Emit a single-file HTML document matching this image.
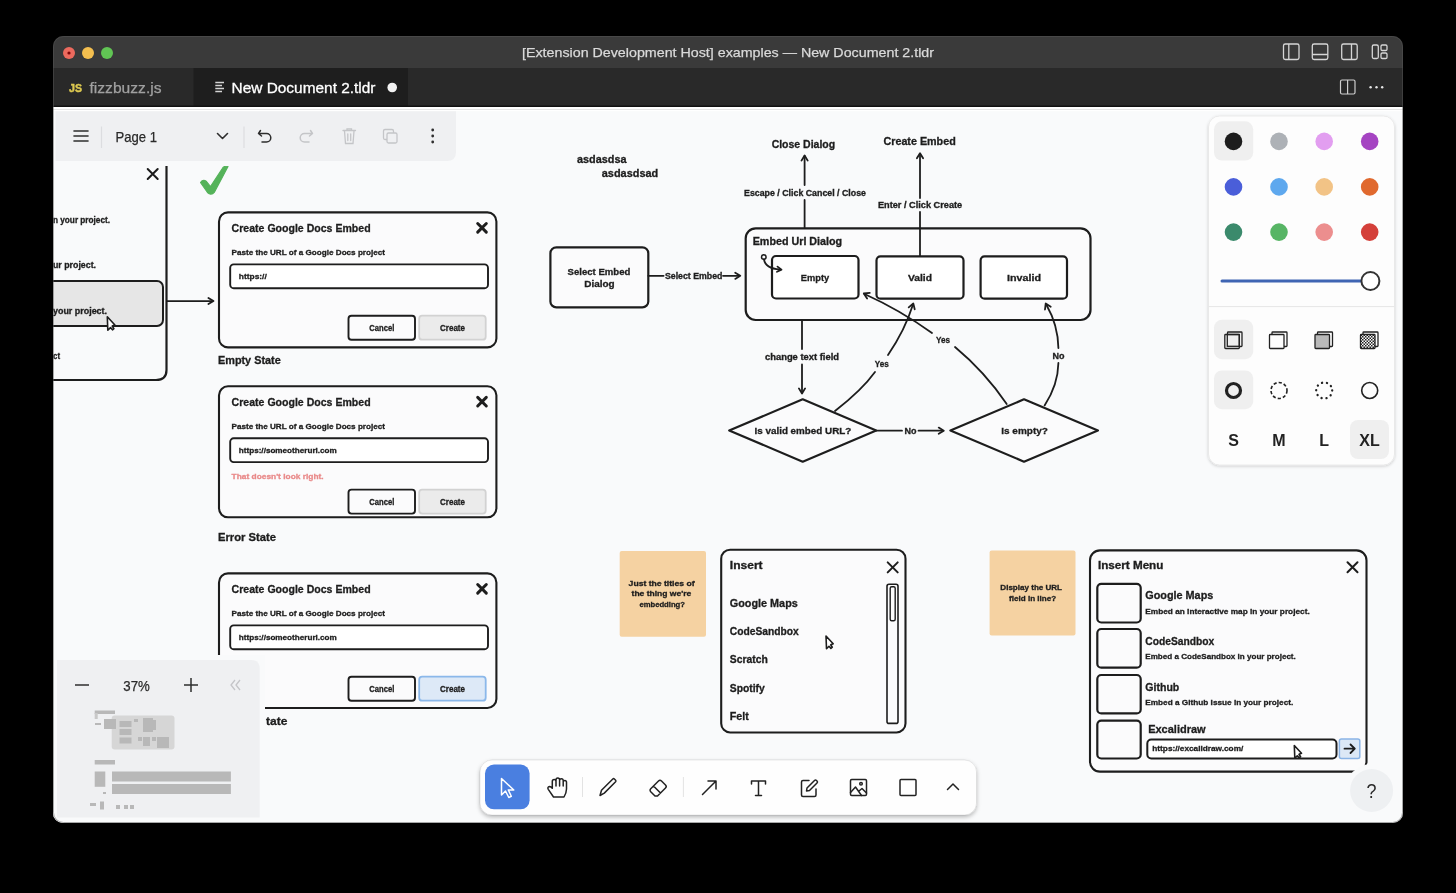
<!DOCTYPE html>
<html><head><meta charset="utf-8">
<style>
html,body{margin:0;padding:0;background:#000;width:1456px;height:893px;overflow:hidden}
svg{position:absolute;left:0;top:0;display:block;will-change:transform}
text{font-family:"Liberation Sans",sans-serif}
.hd{font-weight:bold;fill:#1d1d1d}
</style></head><body>
<svg width="1456" height="893" viewBox="0 0 1456 893">
<defs>
<clipPath id="win"><rect x="53" y="36" width="1350" height="787" rx="10" ry="10"/></clipPath>
<filter id="sh" x="-10%" y="-10%" width="120%" height="130%"><feDropShadow dx="0" dy="1" stdDeviation="1.5" flood-color="#000" flood-opacity="0.18"/></filter>
<filter id="sh2" x="-10%" y="-20%" width="120%" height="150%"><feDropShadow dx="0" dy="2" stdDeviation="2" flood-color="#000" flood-opacity="0.28"/></filter>
</defs>
<rect width="1456" height="893" fill="#000"/>
<g clip-path="url(#win)">
<!-- title bar -->
<rect x="53" y="36" width="1350" height="32" fill="#3a3a3a"/>
<!-- tab bar -->
<rect x="53" y="68" width="1350" height="39" fill="#292929"/>
<rect x="193.5" y="68" width="214.5" height="39" fill="#1e1e1e"/>
<!-- canvas -->
<rect x="53" y="107" width="1350" height="716" fill="#f9fafb"/>
<rect x="53" y="105.6" width="1350" height="1.4" fill="#111"/>
<rect x="53" y="107" width="1350" height="4.2" fill="#ffffff"/>
<rect x="53" y="109" width="1350" height="0.9" fill="#e3e3e3"/>


<!-- tab contents -->
<text x="69" y="91.5" font-size="10.5" font-weight="bold" fill="#dcc850" stroke="#dcc850" stroke-width="0.4" textLength="13" lengthAdjust="spacingAndGlyphs">JS</text>
<text x="89.5" y="92.5" font-size="15" fill="#a0a0a0" stroke="#a0a0a0" stroke-width="0.25" textLength="72" lengthAdjust="spacingAndGlyphs">fizzbuzz.js</text>
<g stroke="#d4d4d4" stroke-width="1.3">
<line x1="215.3" y1="82.5" x2="224" y2="82.5"/><line x1="215.3" y1="85.5" x2="222" y2="85.5"/><line x1="215.3" y1="88.5" x2="224" y2="88.5"/><line x1="215.3" y1="91.5" x2="222" y2="91.5"/>
</g>
<text x="231.5" y="93" font-size="15" fill="#ffffff" stroke="#ffffff" stroke-width="0.3" textLength="144" lengthAdjust="spacingAndGlyphs">New Document 2.tldr</text>
<circle cx="392.2" cy="87.5" r="4.8" fill="#f2f2f2"/>
<!-- tab bar right icons -->
<g fill="none" stroke="#cfcfcf" stroke-width="1.2">
<rect x="1340.5" y="80" width="14.5" height="14" rx="1.5"/><line x1="1347.6" y1="80" x2="1347.6" y2="94"/>
</g>
<circle cx="1370.6" cy="87.3" r="1.2" fill="#e6e6e6"/><circle cx="1376.5" cy="87.3" r="1.2" fill="#e6e6e6"/><circle cx="1382.2" cy="87.3" r="1.2" fill="#e6e6e6"/>
<!-- title bar icons -->
<g fill="none" stroke="#d6d6d6" stroke-width="1.3">
<rect x="1283.5" y="44" width="15.5" height="15.5" rx="1.8"/><line x1="1288.8" y1="44" x2="1288.8" y2="59.5"/>
<rect x="1312.3" y="44" width="15.5" height="15.5" rx="1.8"/><line x1="1312.3" y1="54.5" x2="1327.8" y2="54.5"/>
<rect x="1341.7" y="44" width="15.5" height="15.5" rx="1.8"/><line x1="1351.5" y1="44" x2="1351.5" y2="59.5"/>
<rect x="1372.3" y="45" width="6" height="13.5" rx="1.5"/><rect x="1381" y="45" width="6" height="5.5" rx="1.3"/><rect x="1381" y="53" width="6" height="5.5" rx="1.3"/>
</g>

<!-- CANVAS CONTENT -->
<g id="canvas">
<path d="M166.5 162 V370 Q166.5 380 156 380 H40" fill="none" stroke="#1d1d1d" stroke-width="2.2" stroke-linecap="round" stroke-linejoin="round"/>
<rect x="40" y="281" width="123" height="45" rx="6" fill="#e6e6e6" stroke="#1d1d1d" stroke-width="2"/>
<path d="M147.7 169 L157.7 179 M157.7 169 L147.7 179" fill="none" stroke="#1d1d1d" stroke-width="2" stroke-linecap="round" stroke-linejoin="round"/>
<text x="53.0" y="223.1" font-size="8.5" font-weight="bold" fill="#1d1d1d" stroke="#1d1d1d" stroke-width="0.3" text-anchor="start" textLength="57" lengthAdjust="spacingAndGlyphs">n your project.</text>
<text x="53.0" y="268.4" font-size="8.5" font-weight="bold" fill="#1d1d1d" stroke="#1d1d1d" stroke-width="0.3" text-anchor="start" textLength="43" lengthAdjust="spacingAndGlyphs">ur project.</text>
<text x="53.0" y="313.9" font-size="8.5" font-weight="bold" fill="#1d1d1d" stroke="#1d1d1d" stroke-width="0.3" text-anchor="start" textLength="54" lengthAdjust="spacingAndGlyphs">your project.</text>
<text x="53.0" y="359.3" font-size="8.5" font-weight="bold" fill="#1d1d1d" stroke="#1d1d1d" stroke-width="0.3" text-anchor="start" textLength="7" lengthAdjust="spacingAndGlyphs">ct</text>
<path d="M107.3 316.8 L107.8 330.3 L110.5 327.6 L112.5 329.8 L113.9 328.6 L112.2 326.1 L114.9 325.0 Z" fill="#fff" stroke="#1d1d1d" stroke-width="1.6" stroke-linejoin="round"/>
<path d="M167 301.2 H212" fill="none" stroke="#1d1d1d" stroke-width="1.8" stroke-linecap="round" stroke-linejoin="round"/>
<path d="M208.4 304.1 L213.5 301.0 L208.4 297.9" fill="none" stroke="#1d1d1d" stroke-width="1.8" stroke-linecap="round" stroke-linejoin="round"/>
<path d="M200.5 182.5 Q203 179 206.5 181.5 L210.5 186.5 L223 167.5 Q225.5 165.5 228 166.5 L214.5 192 Q211 196 207.5 192.5 Z" fill="#55b35a" stroke="#55b35a" stroke-width="1.2" stroke-linejoin="round"/>
<rect x="219.0" y="212.4" width="277.4" height="135.0" rx="9" fill="#fbfbfc" stroke="#1d1d1d" stroke-width="2.1"/>
<text x="231.6" y="231.8" font-size="11.5" font-weight="bold" fill="#1d1d1d" stroke="#1d1d1d" stroke-width="0.3" text-anchor="start" textLength="139" lengthAdjust="spacingAndGlyphs">Create Google Docs Embed</text>
<path d="M477.7 223.5 L486.3 232.10000000000002 M486.3 223.5 L477.7 232.10000000000002" fill="none" stroke="#1d1d1d" stroke-width="3" stroke-linecap="round" stroke-linejoin="round"/>
<text x="231.6" y="254.9" font-size="8" font-weight="bold" fill="#1d1d1d" stroke="#1d1d1d" stroke-width="0.3" text-anchor="start" textLength="153.4" lengthAdjust="spacingAndGlyphs">Paste the URL of a Google Docs project</text>
<rect x="230.2" y="264.4" width="257.8" height="23.8" rx="3.5" fill="#ffffff" stroke="#1d1d1d" stroke-width="1.9"/>
<text x="238.8" y="278.9" font-size="8" font-weight="bold" fill="#1d1d1d" stroke="#1d1d1d" stroke-width="0.3" text-anchor="start" textLength="28" lengthAdjust="spacingAndGlyphs">https://</text>
<rect x="348.5" y="315.7" width="66.5" height="24.0" rx="3" fill="#fbfbfc" stroke="#1d1d1d" stroke-width="1.9"/>
<rect x="419.2" y="315.7" width="66.5" height="24.0" rx="3" fill="#ebebeb" stroke="#d2d2d2" stroke-width="1.8"/>
<text x="381.8" y="330.8" font-size="8.5" font-weight="bold" fill="#1d1d1d" stroke="#1d1d1d" stroke-width="0.3" text-anchor="middle" textLength="25" lengthAdjust="spacingAndGlyphs">Cancel</text>
<text x="452.5" y="330.8" font-size="8.5" font-weight="bold" fill="#1d1d1d" stroke="#1d1d1d" stroke-width="0.3" text-anchor="middle" textLength="25" lengthAdjust="spacingAndGlyphs">Create</text>
<text x="218.0" y="363.5" font-size="10.5" font-weight="bold" fill="#1d1d1d" stroke="#1d1d1d" stroke-width="0.3" text-anchor="start" textLength="62.7" lengthAdjust="spacingAndGlyphs">Empty State</text>
<rect x="219.0" y="386.3" width="277.4" height="131.0" rx="9" fill="#fbfbfc" stroke="#1d1d1d" stroke-width="2.1"/>
<text x="231.6" y="405.7" font-size="11.5" font-weight="bold" fill="#1d1d1d" stroke="#1d1d1d" stroke-width="0.3" text-anchor="start" textLength="139" lengthAdjust="spacingAndGlyphs">Create Google Docs Embed</text>
<path d="M477.7 397.4 L486.3 406.0 M486.3 397.4 L477.7 406.0" fill="none" stroke="#1d1d1d" stroke-width="3" stroke-linecap="round" stroke-linejoin="round"/>
<text x="231.6" y="428.8" font-size="8" font-weight="bold" fill="#1d1d1d" stroke="#1d1d1d" stroke-width="0.3" text-anchor="start" textLength="153.4" lengthAdjust="spacingAndGlyphs">Paste the URL of a Google Docs project</text>
<rect x="230.2" y="438.3" width="257.8" height="23.8" rx="3.5" fill="#ffffff" stroke="#1d1d1d" stroke-width="1.9"/>
<text x="238.8" y="452.8" font-size="8" font-weight="bold" fill="#1d1d1d" stroke="#1d1d1d" stroke-width="0.3" text-anchor="start" textLength="98" lengthAdjust="spacingAndGlyphs">https://someotherurl.com</text>
<text x="231.6" y="478.5" font-size="8" font-weight="bold" fill="#e98a8a" stroke="#e98a8a" stroke-width="0.3" text-anchor="start" textLength="92" lengthAdjust="spacingAndGlyphs">That doesn't look right.</text>
<rect x="348.5" y="489.6" width="66.5" height="24.0" rx="3" fill="#fbfbfc" stroke="#1d1d1d" stroke-width="1.9"/>
<rect x="419.2" y="489.6" width="66.5" height="24.0" rx="3" fill="#ebebeb" stroke="#d2d2d2" stroke-width="1.8"/>
<text x="381.8" y="504.7" font-size="8.5" font-weight="bold" fill="#1d1d1d" stroke="#1d1d1d" stroke-width="0.3" text-anchor="middle" textLength="25" lengthAdjust="spacingAndGlyphs">Cancel</text>
<text x="452.5" y="504.7" font-size="8.5" font-weight="bold" fill="#1d1d1d" stroke="#1d1d1d" stroke-width="0.3" text-anchor="middle" textLength="25" lengthAdjust="spacingAndGlyphs">Create</text>
<text x="218.0" y="540.6" font-size="10.5" font-weight="bold" fill="#1d1d1d" stroke="#1d1d1d" stroke-width="0.3" text-anchor="start" textLength="58" lengthAdjust="spacingAndGlyphs">Error State</text>
<rect x="219.0" y="573.4" width="277.4" height="134.6" rx="9" fill="#fbfbfc" stroke="#1d1d1d" stroke-width="2.1"/>
<text x="231.6" y="592.8" font-size="11.5" font-weight="bold" fill="#1d1d1d" stroke="#1d1d1d" stroke-width="0.3" text-anchor="start" textLength="139" lengthAdjust="spacingAndGlyphs">Create Google Docs Embed</text>
<path d="M477.7 584.5 L486.3 593.0999999999999 M486.3 584.5 L477.7 593.0999999999999" fill="none" stroke="#1d1d1d" stroke-width="3" stroke-linecap="round" stroke-linejoin="round"/>
<text x="231.6" y="615.9" font-size="8" font-weight="bold" fill="#1d1d1d" stroke="#1d1d1d" stroke-width="0.3" text-anchor="start" textLength="153.4" lengthAdjust="spacingAndGlyphs">Paste the URL of a Google Docs project</text>
<rect x="230.2" y="625.4" width="257.8" height="23.8" rx="3.5" fill="#ffffff" stroke="#1d1d1d" stroke-width="1.9"/>
<text x="238.8" y="639.9" font-size="8" font-weight="bold" fill="#1d1d1d" stroke="#1d1d1d" stroke-width="0.3" text-anchor="start" textLength="98" lengthAdjust="spacingAndGlyphs">https://someotherurl.com</text>
<rect x="348.5" y="676.7" width="66.5" height="24.0" rx="3" fill="#fbfbfc" stroke="#1d1d1d" stroke-width="1.9"/>
<rect x="419.2" y="676.7" width="66.5" height="24.0" rx="3" fill="#dde9f7" stroke="#8bb8ea" stroke-width="1.8"/>
<text x="381.8" y="691.8" font-size="8.5" font-weight="bold" fill="#1d1d1d" stroke="#1d1d1d" stroke-width="0.3" text-anchor="middle" textLength="25" lengthAdjust="spacingAndGlyphs">Cancel</text>
<text x="452.5" y="691.8" font-size="8.5" font-weight="bold" fill="#1d1d1d" stroke="#1d1d1d" stroke-width="0.3" text-anchor="middle" textLength="25" lengthAdjust="spacingAndGlyphs">Create</text>
<text x="266.0" y="724.5" font-size="10.5" font-weight="bold" fill="#1d1d1d" stroke="#1d1d1d" stroke-width="0.3" text-anchor="start" textLength="21.3" lengthAdjust="spacingAndGlyphs">tate</text>
<text x="577.0" y="162.8" font-size="11" font-weight="bold" fill="#1d1d1d" stroke="#1d1d1d" stroke-width="0.3" text-anchor="start" textLength="49.5" lengthAdjust="spacingAndGlyphs">asdasdsa</text>
<text x="601.8" y="177.2" font-size="11" font-weight="bold" fill="#1d1d1d" stroke="#1d1d1d" stroke-width="0.3" text-anchor="start" textLength="56.4" lengthAdjust="spacingAndGlyphs">asdasdsad</text>
<rect x="550.4" y="247.3" width="97.9" height="60.1" rx="6" fill="#fbfbfc" stroke="#1d1d1d" stroke-width="2.2"/>
<text x="599.0" y="274.7" font-size="9.5" font-weight="bold" fill="#1d1d1d" stroke="#1d1d1d" stroke-width="0.3" text-anchor="middle" textLength="62.8" lengthAdjust="spacingAndGlyphs">Select Embed</text>
<text x="599.5" y="287.1" font-size="9.5" font-weight="bold" fill="#1d1d1d" stroke="#1d1d1d" stroke-width="0.3" text-anchor="middle" textLength="30.4" lengthAdjust="spacingAndGlyphs">Dialog</text>
<path d="M648.3 275.8 H663.6" fill="none" stroke="#1d1d1d" stroke-width="1.8" stroke-linecap="round" stroke-linejoin="round"/>
<text x="664.9" y="278.9" font-size="8.5" font-weight="bold" fill="#1d1d1d" stroke="#1d1d1d" stroke-width="0.3" text-anchor="start" textLength="57.6" lengthAdjust="spacingAndGlyphs">Select Embed</text>
<path d="M723 275.8 H739" fill="none" stroke="#1d1d1d" stroke-width="1.8" stroke-linecap="round" stroke-linejoin="round"/>
<path d="M735.2 278.9 L740.3 275.8 L735.2 272.7" fill="none" stroke="#1d1d1d" stroke-width="1.8" stroke-linecap="round" stroke-linejoin="round"/>
<rect x="745.7" y="228.3" width="344.8" height="91.7" rx="10" fill="#fbfbfc" stroke="#1d1d1d" stroke-width="2.2"/>
<text x="752.7" y="244.8" font-size="10" font-weight="bold" fill="#1d1d1d" stroke="#1d1d1d" stroke-width="0.3" text-anchor="start" textLength="89.5" lengthAdjust="spacingAndGlyphs">Embed Url Dialog</text>
<rect x="772.0" y="256.0" width="86.5" height="42.5" rx="4" fill="#ffffff" stroke="#1d1d1d" stroke-width="2.2"/>
<text x="815.0" y="281.2" font-size="9.5" font-weight="bold" fill="#1d1d1d" stroke="#1d1d1d" stroke-width="0.3" text-anchor="middle" textLength="28.4" lengthAdjust="spacingAndGlyphs">Empty</text>
<rect x="876.5" y="256.4" width="87.0" height="42.3" rx="4" fill="#ffffff" stroke="#1d1d1d" stroke-width="2.2"/>
<text x="920.0" y="280.5" font-size="9.5" font-weight="bold" fill="#1d1d1d" stroke="#1d1d1d" stroke-width="0.3" text-anchor="middle" textLength="24" lengthAdjust="spacingAndGlyphs">Valid</text>
<rect x="980.6" y="256.4" width="86.4" height="42.3" rx="4" fill="#ffffff" stroke="#1d1d1d" stroke-width="2.2"/>
<text x="1024.0" y="280.5" font-size="9.5" font-weight="bold" fill="#1d1d1d" stroke="#1d1d1d" stroke-width="0.3" text-anchor="middle" textLength="34" lengthAdjust="spacingAndGlyphs">Invalid</text>
<circle cx="763.8" cy="257" r="2.3" fill="#fbfbfc" stroke="#1d1d1d" stroke-width="1.5"/>
<path d="M764 259.5 Q765.5 268.5 780 269.5" fill="none" stroke="#1d1d1d" stroke-width="1.8" stroke-linecap="round" stroke-linejoin="round"/>
<path d="M777.0 271.8 L781.5 269.6 L777.5 266.6" fill="none" stroke="#1d1d1d" stroke-width="1.8" stroke-linecap="round" stroke-linejoin="round"/>
<text x="803.4" y="147.8" font-size="10.5" font-weight="bold" fill="#1d1d1d" stroke="#1d1d1d" stroke-width="0.3" text-anchor="middle" textLength="63.5" lengthAdjust="spacingAndGlyphs">Close Dialog</text>
<path d="M804.6 227.6 V200 M804.6 185 V156" fill="none" stroke="#1d1d1d" stroke-width="1.8" stroke-linecap="round" stroke-linejoin="round"/>
<path d="M807.7 160.6 L804.6 155.5 L801.5 160.6" fill="none" stroke="#1d1d1d" stroke-width="1.8" stroke-linecap="round" stroke-linejoin="round"/>
<text x="805.0" y="195.6" font-size="8.5" font-weight="bold" fill="#1d1d1d" stroke="#1d1d1d" stroke-width="0.3" text-anchor="middle" textLength="122" lengthAdjust="spacingAndGlyphs">Escape / Click Cancel / Close</text>
<text x="919.6" y="145.0" font-size="10.5" font-weight="bold" fill="#1d1d1d" stroke="#1d1d1d" stroke-width="0.3" text-anchor="middle" textLength="72.2" lengthAdjust="spacingAndGlyphs">Create Embed</text>
<path d="M920 256 V212 M920 198 V154" fill="none" stroke="#1d1d1d" stroke-width="1.8" stroke-linecap="round" stroke-linejoin="round"/>
<path d="M923.1 158.3 L920.0 153.2 L916.9 158.3" fill="none" stroke="#1d1d1d" stroke-width="1.8" stroke-linecap="round" stroke-linejoin="round"/>
<text x="920.1" y="208.2" font-size="8.5" font-weight="bold" fill="#1d1d1d" stroke="#1d1d1d" stroke-width="0.3" text-anchor="middle" textLength="84.3" lengthAdjust="spacingAndGlyphs">Enter / Click Create</text>
<path d="M802 320.5 V349 M802 364.5 V392" fill="none" stroke="#1d1d1d" stroke-width="1.8" stroke-linecap="round" stroke-linejoin="round"/>
<path d="M798.9 388.4 L802.0 393.5 L805.1 388.4" fill="none" stroke="#1d1d1d" stroke-width="1.8" stroke-linecap="round" stroke-linejoin="round"/>
<text x="802.0" y="359.9" font-size="8.5" font-weight="bold" fill="#1d1d1d" stroke="#1d1d1d" stroke-width="0.3" text-anchor="middle" textLength="74" lengthAdjust="spacingAndGlyphs">change text field</text>
<path d="M729.2 430.5 Q766 415 802.7 399.3 Q839.5 415 876.2 430.5 Q839.5 446 802.7 461.7 Q766 446 729.2 430.5 Z" fill="#fbfbfc" stroke="#1d1d1d" stroke-width="2.2" stroke-linecap="round" stroke-linejoin="round"/>
<text x="802.9" y="434.1" font-size="9.5" font-weight="bold" fill="#1d1d1d" stroke="#1d1d1d" stroke-width="0.3" text-anchor="middle" textLength="96.7" lengthAdjust="spacingAndGlyphs">Is valid embed URL?</text>
<path d="M950.4 430.5 L1024 399.3 L1097.9 430.5 L1024 461.7 Z" fill="#fbfbfc" stroke="#1d1d1d" stroke-width="2.2" stroke-linecap="round" stroke-linejoin="round"/>
<text x="1024.6" y="434.1" font-size="9.5" font-weight="bold" fill="#1d1d1d" stroke="#1d1d1d" stroke-width="0.3" text-anchor="middle" textLength="46.7" lengthAdjust="spacingAndGlyphs">Is empty?</text>
<path d="M876.5 430.7 H902 M918.5 430.7 H942.5" fill="none" stroke="#1d1d1d" stroke-width="1.8" stroke-linecap="round" stroke-linejoin="round"/>
<path d="M938.7 433.8 L943.8 430.7 L938.7 427.6" fill="none" stroke="#1d1d1d" stroke-width="1.8" stroke-linecap="round" stroke-linejoin="round"/>
<text x="910.5" y="433.8" font-size="8.5" font-weight="bold" fill="#1d1d1d" stroke="#1d1d1d" stroke-width="0.3" text-anchor="middle" textLength="12" lengthAdjust="spacingAndGlyphs">No</text>
<path d="M835 411 Q862 390 875 372 M888 355 Q905 330 912.8 305" fill="none" stroke="#1d1d1d" stroke-width="1.8" stroke-linecap="round" stroke-linejoin="round"/>
<path d="M914.7 309.3 L913.3 303.5 L908.7 307.4" fill="none" stroke="#1d1d1d" stroke-width="1.8" stroke-linecap="round" stroke-linejoin="round"/>
<text x="881.7" y="367.3" font-size="8.5" font-weight="bold" fill="#1d1d1d" stroke="#1d1d1d" stroke-width="0.3" text-anchor="middle" textLength="14" lengthAdjust="spacingAndGlyphs">Yes</text>
<path d="M1006.7 404 Q985 372 955 347 M932 333 Q900 310 864.5 294" fill="none" stroke="#1d1d1d" stroke-width="1.8" stroke-linecap="round" stroke-linejoin="round"/>
<path d="M869.8 292.8 L863.8 293.5 L867.1 298.5" fill="none" stroke="#1d1d1d" stroke-width="1.8" stroke-linecap="round" stroke-linejoin="round"/>
<text x="943.0" y="342.6" font-size="8.5" font-weight="bold" fill="#1d1d1d" stroke="#1d1d1d" stroke-width="0.3" text-anchor="middle" textLength="14" lengthAdjust="spacingAndGlyphs">Yes</text>
<path d="M1044.6 405.4 Q1058 385 1058.4 363 M1058.4 348 Q1058 325 1046.5 305" fill="none" stroke="#1d1d1d" stroke-width="1.8" stroke-linecap="round" stroke-linejoin="round"/>
<path d="M1050.7 306.8 L1045.7 303.5 L1045.0 309.5" fill="none" stroke="#1d1d1d" stroke-width="1.8" stroke-linecap="round" stroke-linejoin="round"/>
<text x="1058.4" y="358.5" font-size="8.5" font-weight="bold" fill="#1d1d1d" stroke="#1d1d1d" stroke-width="0.3" text-anchor="middle" textLength="12" lengthAdjust="spacingAndGlyphs">No</text>
<rect x="619.7" y="551" width="86.3" height="85.7" rx="2" fill="#f5d2a2"/>
<text x="661.6" y="585.7" font-size="7.5" font-weight="bold" fill="#1d1d1d" stroke="#1d1d1d" stroke-width="0.3" text-anchor="middle" textLength="66" lengthAdjust="spacingAndGlyphs">Just the titles of</text>
<text x="661.4" y="596.3" font-size="7.5" font-weight="bold" fill="#1d1d1d" stroke="#1d1d1d" stroke-width="0.3" text-anchor="middle" textLength="59.7" lengthAdjust="spacingAndGlyphs">the thing we're</text>
<text x="662.2" y="606.7" font-size="7.5" font-weight="bold" fill="#1d1d1d" stroke="#1d1d1d" stroke-width="0.3" text-anchor="middle" textLength="45.6" lengthAdjust="spacingAndGlyphs">embedding?</text>
<rect x="989.6" y="550.4" width="85.9" height="85" rx="2" fill="#f5d2a2"/>
<text x="1031.2" y="590.3" font-size="7.5" font-weight="bold" fill="#1d1d1d" stroke="#1d1d1d" stroke-width="0.3" text-anchor="middle" textLength="61.7" lengthAdjust="spacingAndGlyphs">Display the URL</text>
<text x="1032.6" y="600.5" font-size="7.5" font-weight="bold" fill="#1d1d1d" stroke="#1d1d1d" stroke-width="0.3" text-anchor="middle" textLength="47" lengthAdjust="spacingAndGlyphs">field in line?</text>
<rect x="721.2" y="549.7" width="184.3" height="182.8" rx="9" fill="#fbfbfc" stroke="#1d1d1d" stroke-width="2.1"/>
<text x="729.8" y="569.3" font-size="10" font-weight="bold" fill="#1d1d1d" stroke="#1d1d1d" stroke-width="0.3" text-anchor="start" textLength="32.8" lengthAdjust="spacingAndGlyphs">Insert</text>
<path d="M887.7 562.4 L897.7 572.4 M897.7 562.4 L887.7 572.4" fill="none" stroke="#1d1d1d" stroke-width="2" stroke-linecap="round" stroke-linejoin="round"/>
<text x="729.8" y="606.5" font-size="10.5" font-weight="bold" fill="#1d1d1d" stroke="#1d1d1d" stroke-width="0.3" text-anchor="start" textLength="68" lengthAdjust="spacingAndGlyphs">Google Maps</text>
<text x="729.8" y="634.8" font-size="10.5" font-weight="bold" fill="#1d1d1d" stroke="#1d1d1d" stroke-width="0.3" text-anchor="start" textLength="69" lengthAdjust="spacingAndGlyphs">CodeSandbox</text>
<text x="729.8" y="662.6" font-size="10.5" font-weight="bold" fill="#1d1d1d" stroke="#1d1d1d" stroke-width="0.3" text-anchor="start" textLength="38" lengthAdjust="spacingAndGlyphs">Scratch</text>
<text x="729.8" y="691.5" font-size="10.5" font-weight="bold" fill="#1d1d1d" stroke="#1d1d1d" stroke-width="0.3" text-anchor="start" textLength="35" lengthAdjust="spacingAndGlyphs">Spotify</text>
<text x="729.8" y="719.8" font-size="10.5" font-weight="bold" fill="#1d1d1d" stroke="#1d1d1d" stroke-width="0.3" text-anchor="start" textLength="19" lengthAdjust="spacingAndGlyphs">Felt</text>
<rect x="887.0" y="584.2" width="11.0" height="139.2" rx="2" fill="#fbfbfc" stroke="#1d1d1d" stroke-width="1.6"/>
<rect x="890.2" y="586.7" width="5.0" height="34.0" rx="1.5" fill="#fbfbfc" stroke="#1d1d1d" stroke-width="1.4"/>
<path d="M826.0 636.0 L826.5 648.8 L829.0 646.3 L830.9 648.4 L832.3 647.2 L830.7 644.8 L833.2 643.8 Z" fill="#fff" stroke="#1d1d1d" stroke-width="1.6" stroke-linejoin="round"/>
<rect x="1090.0" y="550.4" width="276.5" height="221.2" rx="10" fill="#fbfbfc" stroke="#1d1d1d" stroke-width="2.1"/>
<text x="1097.9" y="569.1" font-size="10" font-weight="bold" fill="#1d1d1d" stroke="#1d1d1d" stroke-width="0.3" text-anchor="start" textLength="65.5" lengthAdjust="spacingAndGlyphs">Insert Menu</text>
<path d="M1347.5 562.3 L1357.5 572.3 M1357.5 562.3 L1347.5 572.3" fill="none" stroke="#1d1d1d" stroke-width="2" stroke-linecap="round" stroke-linejoin="round"/>
<rect x="1097.3" y="583.8" width="43.4" height="38.7" rx="4" fill="#fbfbfc" stroke="#1d1d1d" stroke-width="2.2"/>
<text x="1145.3" y="599.3" font-size="10.5" font-weight="bold" fill="#1d1d1d" stroke="#1d1d1d" stroke-width="0.3" text-anchor="start" textLength="68" lengthAdjust="spacingAndGlyphs">Google Maps</text>
<text x="1145.3" y="613.8" font-size="8" font-weight="bold" fill="#1d1d1d" stroke="#1d1d1d" stroke-width="0.3" text-anchor="start" textLength="164.4" lengthAdjust="spacingAndGlyphs">Embed an interactive map in your project.</text>
<rect x="1097.3" y="629.0" width="43.4" height="38.7" rx="4" fill="#fbfbfc" stroke="#1d1d1d" stroke-width="2.2"/>
<text x="1145.3" y="645.0" font-size="10.5" font-weight="bold" fill="#1d1d1d" stroke="#1d1d1d" stroke-width="0.3" text-anchor="start" textLength="69" lengthAdjust="spacingAndGlyphs">CodeSandbox</text>
<text x="1145.3" y="658.9" font-size="8" font-weight="bold" fill="#1d1d1d" stroke="#1d1d1d" stroke-width="0.3" text-anchor="start" textLength="150.5" lengthAdjust="spacingAndGlyphs">Embed a CodeSandbox in your project.</text>
<rect x="1097.3" y="675.0" width="43.4" height="38.4" rx="4" fill="#fbfbfc" stroke="#1d1d1d" stroke-width="2.2"/>
<text x="1145.3" y="691.0" font-size="10.5" font-weight="bold" fill="#1d1d1d" stroke="#1d1d1d" stroke-width="0.3" text-anchor="start" textLength="34" lengthAdjust="spacingAndGlyphs">Github</text>
<text x="1145.3" y="704.6" font-size="8" font-weight="bold" fill="#1d1d1d" stroke="#1d1d1d" stroke-width="0.3" text-anchor="start" textLength="148" lengthAdjust="spacingAndGlyphs">Embed a Github Issue in your project.</text>
<rect x="1097.3" y="720.6" width="43.4" height="37.9" rx="4" fill="#fbfbfc" stroke="#1d1d1d" stroke-width="2.2"/>
<text x="1148.2" y="733.2" font-size="10.5" font-weight="bold" fill="#1d1d1d" stroke="#1d1d1d" stroke-width="0.3" text-anchor="start" textLength="57.4" lengthAdjust="spacingAndGlyphs">Excalidraw</text>
<rect x="1147.3" y="739.5" width="189.2" height="19.0" rx="4" fill="#ffffff" stroke="#1d1d1d" stroke-width="2"/>
<text x="1152.3" y="751.2" font-size="8" font-weight="bold" fill="#1d1d1d" stroke="#1d1d1d" stroke-width="0.3" text-anchor="start" textLength="91" lengthAdjust="spacingAndGlyphs">https://excalidraw.com/</text>
<rect x="1339.4" y="739.0" width="20.4" height="19.5" rx="2" fill="#dce8f6" stroke="#8ab4e6" stroke-width="1.5"/>
<path d="M1344.5 748.7 H1354.5 M1350.5 744.5 L1354.8 748.7 L1350.5 753" fill="none" stroke="#1d1d1d" stroke-width="1.8" stroke-linecap="round" stroke-linejoin="round"/>
<path d="M1294.3 745.5 L1294.8 758.3 L1297.3 755.8 L1299.2 757.9 L1300.6 756.7 L1299.0 754.3 L1301.5 753.3 Z" fill="#fff" stroke="#1d1d1d" stroke-width="1.6" stroke-linejoin="round"/>
</g>

<!-- UI PANELS -->
<g id="ui">
<!-- top-left menu panel -->
<rect x="53" y="111.2" width="408" height="54.8" fill="#f9fafb"/>
<path d="M55.5 111.2 H456 V152 Q456 161 447 161 H55.5 Z" fill="#eff0f2"/>
<g stroke="#2e2e2e" stroke-width="1.6" stroke-linecap="round">
<line x1="74" y1="131" x2="88" y2="131"/><line x1="74" y1="136" x2="88" y2="136"/><line x1="74" y1="141" x2="88" y2="141"/>
</g>
<line x1="101.5" y1="126.5" x2="101.5" y2="148" stroke="#dcdde0" stroke-width="1.2"/>
<line x1="244" y1="126.5" x2="244" y2="148" stroke="#dcdde0" stroke-width="1.2"/>
<text x="115.5" y="141.5" font-size="14.5" fill="#2a2a2a" stroke="#2a2a2a" stroke-width="0.25" textLength="41.5" lengthAdjust="spacingAndGlyphs">Page 1</text>
<path d="M217.5 133.5 L222.5 138.5 L227.5 133.5" fill="none" stroke="#2e2e2e" stroke-width="1.6" stroke-linecap="round" stroke-linejoin="round"/>
<!-- undo -->
<path d="M260.5 130.5 L258.5 133.5 L261.5 136 M258.8 133.5 H266.5 A4.3 4.3 0 0 1 266.5 142.1 H262" fill="none" stroke="#2e2e2e" stroke-width="1.5" stroke-linecap="round" stroke-linejoin="round"/>
<!-- redo -->
<path d="M310.5 130.5 L312.5 133.5 L309.5 136 M312.2 133.5 H304.5 A4.3 4.3 0 0 0 304.5 142.1 H309" fill="none" stroke="#c4c5c8" stroke-width="1.5" stroke-linecap="round" stroke-linejoin="round"/>
<!-- trash -->
<g fill="none" stroke="#c4c5c8" stroke-width="1.3" stroke-linecap="round">
<path d="M343 130.5 H355.5 M347 130.5 V128.8 H351.5 V130.5 M344.5 131 L345.5 143.5 H353 L354 131 M347.8 134 V140.5 M350.7 134 V140.5"/>
</g>
<!-- duplicate -->
<g fill="none" stroke="#c4c5c8" stroke-width="1.3">
<rect x="383.5" y="129.5" width="10" height="10" rx="1.5"/><rect x="387" y="133" width="10" height="10" rx="1.5" fill="#eff0f2"/>
</g>
<!-- more -->
<circle cx="432.7" cy="130" r="1.4" fill="#2e2e2e"/><circle cx="432.7" cy="136" r="1.4" fill="#2e2e2e"/><circle cx="432.7" cy="142" r="1.4" fill="#2e2e2e"/>

<!-- minimap panel -->
<rect x="53" y="655" width="212" height="168" fill="#f9fafb"/>
<path d="M57 660 H251 Q259.7 660 259.7 669 V817.5 H57 Z" fill="#eff0f2"/>
<line x1="75" y1="685" x2="89" y2="685" stroke="#2e2e2e" stroke-width="1.5"/>
<text x="123.3" y="690.5" font-size="14.5" fill="#2a2a2a" stroke="#2a2a2a" stroke-width="0.25" textLength="26.5" lengthAdjust="spacingAndGlyphs">37%</text>
<path d="M184 685 H198 M191 678 V692" stroke="#2e2e2e" stroke-width="1.5"/>
<path d="M235 680 L231 685 L235 690 M240 680 L236 685 L240 690" fill="none" stroke="#c4c5c8" stroke-width="1.3"/>
<g fill="#b8b8b8">
<rect x="94.7" y="710.5" width="20.3" height="3.5"/>
<rect x="111.7" y="715.5" width="62.8" height="34" rx="3" fill="#d6d6d6"/>
<rect x="104" y="719" width="12" height="10"/>
<rect x="119.5" y="721" width="12" height="6"/><rect x="119.5" y="729" width="12" height="6"/><rect x="119.5" y="737.5" width="12" height="6"/>
<rect x="134" y="719" width="4" height="3"/>
<rect x="143" y="718" width="10" height="14"/><rect x="150" y="720" width="6" height="10"/>
<rect x="138" y="737" width="4" height="4"/><rect x="143" y="737" width="7" height="9"/><rect x="152" y="737" width="4" height="4"/><rect x="157" y="737" width="12" height="11"/>
<rect x="94.7" y="713" width="3" height="6" fill="#c8c8c8"/><rect x="95" y="723" width="6" height="2"/>
<rect x="94.7" y="760" width="20.3" height="4.5"/>
<rect x="94.7" y="771.5" width="10.6" height="15.3"/>
<rect x="112" y="771.5" width="118.9" height="10"/>
<rect x="112" y="784" width="118.9" height="10"/>
<rect x="103" y="792" width="3" height="2"/>
<rect x="90" y="803" width="6" height="3"/><rect x="100" y="801.5" width="4" height="8"/><rect x="116" y="805" width="4" height="4"/><rect x="124" y="805" width="4" height="4"/><rect x="130" y="805" width="4" height="4"/>
</g>

<!-- style panel -->
<rect x="1208.5" y="116" width="186" height="349" rx="11" fill="#fdfdfd" stroke="#e6e6e6" stroke-width="0.8" filter="url(#sh)"/>
<rect x="1214" y="121.3" width="39.2" height="39.2" rx="8" fill="#efefef"/>
<g>
<circle cx="1233.5" cy="141.4" r="8.8" fill="#1d1d1d"/>
<circle cx="1279" cy="141.4" r="8.8" fill="#adb1b6"/>
<circle cx="1324.2" cy="141.4" r="8.8" fill="#e29ef0"/>
<circle cx="1369.7" cy="141.4" r="8.8" fill="#a544c2"/>
<circle cx="1233.5" cy="186.9" r="8.8" fill="#4a5ed9"/>
<circle cx="1279" cy="186.9" r="8.8" fill="#5ea8ee"/>
<circle cx="1324.2" cy="186.9" r="8.8" fill="#f2c386"/>
<circle cx="1369.7" cy="186.9" r="8.8" fill="#e0692e"/>
<circle cx="1233.5" cy="232.1" r="8.8" fill="#3b8a6c"/>
<circle cx="1279" cy="232.1" r="8.8" fill="#57b565"/>
<circle cx="1324.2" cy="232.1" r="8.8" fill="#ec8e8e"/>
<circle cx="1369.7" cy="232.1" r="8.8" fill="#d4403a"/>
</g>
<line x1="1222" y1="281" x2="1362" y2="281" stroke="#3f65b3" stroke-width="3" stroke-linecap="round"/>
<circle cx="1370.4" cy="281" r="9" fill="#fff" stroke="#333" stroke-width="2"/>
<line x1="1208.5" y1="306.6" x2="1394.5" y2="306.6" stroke="#e6e6e6" stroke-width="1"/>
<rect x="1214" y="319.8" width="39.2" height="39.4" rx="8" fill="#efefef"/>
<rect x="1214" y="370.5" width="39.2" height="38.7" rx="8" fill="#efefef"/>
<rect x="1350" y="420" width="39" height="39" rx="8" fill="#efefef"/>
<!-- fill icons -->
<defs><pattern id="hatch" width="3" height="3" patternUnits="userSpaceOnUse"><rect width="3" height="3" fill="#fff"/><rect width="1.5" height="1.5" fill="#222"/><rect x="1.5" y="1.5" width="1.5" height="1.5" fill="#222"/></pattern></defs>
<g fill="none" stroke="#222" stroke-width="1.3">
<rect x="1227.5" y="332" width="14.5" height="14.5" rx="0.8"/><rect x="1224.8" y="334.5" width="14.5" height="14" rx="0.8" fill="#efefef"/><rect x="1227.3" y="334.5" width="12" height="11.8" fill="none"/>
<rect x="1272" y="332" width="15" height="14.5" rx="0.8"/><rect x="1269.5" y="334.5" width="14.5" height="14" rx="0.8" fill="#fdfdfd"/>
<rect x="1317.5" y="332" width="15" height="14.5" rx="0.8"/><rect x="1315" y="334.5" width="14.5" height="14" rx="0.8" fill="#b9b9b9"/>
<rect x="1363" y="332" width="15" height="14.5" rx="0.8"/><rect x="1360.5" y="334.5" width="14.5" height="14" rx="0.8" fill="url(#hatch)"/>
</g>
<!-- dash icons -->
<circle cx="1233.5" cy="390.5" r="7" fill="none" stroke="#222" stroke-width="3.2"/>
<circle cx="1279" cy="390.5" r="8" fill="none" stroke="#222" stroke-width="1.6" stroke-dasharray="3.2 2.1"/>
<circle cx="1324.2" cy="390.5" r="8" fill="none" stroke="#222" stroke-width="2.3" stroke-dasharray="0.1 4.93" stroke-linecap="round"/>
<circle cx="1369.7" cy="390.5" r="8" fill="none" stroke="#222" stroke-width="1.6"/>
<!-- sizes -->
<g font-size="16" font-weight="bold" fill="#222" text-anchor="middle">
<text x="1233.5" y="446">S</text><text x="1279" y="446">M</text><text x="1324.2" y="446">L</text><text x="1369.5" y="446">XL</text>
</g>

<!-- bottom toolbar -->
<rect x="480" y="760" width="496.5" height="55" rx="12" fill="#fefefe" stroke="#000" stroke-opacity="0.1" stroke-width="0.8" filter="url(#sh2)"/>
<rect x="485" y="764.6" width="44.6" height="44.7" rx="9" fill="#4a7fe0"/>
<line x1="582.5" y1="777" x2="582.5" y2="797" stroke="#e3e3e3"/>
<line x1="683.4" y1="777" x2="683.4" y2="797" stroke="#e3e3e3"/>
<!-- select cursor -->
<path d="M501.5 778.5 L501.5 795 L505.5 791 L508.8 797.5 L511.3 796.3 L508.3 790 L513.8 790 Z" fill="#4a7fe0" stroke="#fff" stroke-width="1.5" stroke-linejoin="round"/>
<g fill="none" stroke="#222" stroke-width="1.5" stroke-linecap="round" stroke-linejoin="round">
<!-- hand -->
<path d="M553.5 797 L548.3 789.3 Q547 787 549.6 786.5 Q550.8 786.4 552.3 788.3 V781.5 Q552.3 779.6 554.2 779.6 Q556 779.6 556 781.5 V780 Q556 778 557.8 778 Q559.6 778 559.6 780 V780.6 Q559.6 778.8 561.4 778.8 Q563.2 778.8 563.2 780.6 V782.3 Q563.2 780.5 564.8 780.5 Q566.5 780.5 566.5 782.3 V789 Q566.5 792.5 564 797 Z M556 781.5 V786 M559.6 780.5 V786 M563.2 782 V786"/>
<!-- pencil -->
<path d="M600 795.5 L601.5 790.3 L612.8 779 Q613.6 778.3 614.4 779 L615.6 780.2 Q616.3 781 615.6 781.8 L604.3 793.1 Z"/>
<!-- eraser -->
<path d="M650.5 789 L658.5 781 Q660 779.5 661.5 781 L665.5 785 Q667 786.5 665.5 788 L657.5 796 H655 L650.5 791.5 Q649.5 790 650.5 789 Z M653.5 786 L660.5 793"/>
<!-- arrow -->
<path d="M702.5 794.5 L715.5 781.5 M708 781 H716 V789"/>
<!-- T -->
<path d="M751.5 784 V781 H765.5 V784 M758.5 781 V795.5 M755.5 795.5 H761.5"/>
<!-- note -->
<path d="M809 780.5 H803 Q801.5 780.5 801.5 782 V795 Q801.5 796.5 803 796.5 H814.5 Q816 796.5 816 795 V789 M806.5 791 L807 788 L814.5 780.5 Q815.5 779.5 816.5 780.5 L817 781 Q818 782 817 783 L809.5 790.5 Z"/>
<!-- image -->
<rect x="850.5" y="779.5" width="16" height="16" rx="1.2"/>
<path d="M850.5 792.5 L855.5 787 L861.5 795.5 M859 791 L862 788.5 L866.5 793"/>
<circle cx="861" cy="783.8" r="1.3"/>
<!-- rect -->
<rect x="900" y="779.5" width="16" height="16" rx="1"/>
<!-- chevron -->
<path d="M947.5 789.5 L953 784 L958.5 789.5"/>
</g>

<!-- help -->
<circle cx="1371.6" cy="790.5" r="26.5" fill="#f9fafb"/>
<circle cx="1371.6" cy="790.5" r="21.5" fill="#eef0f2"/>
<text x="1371.6" y="798" font-size="20" fill="#2a2a2a" text-anchor="middle" textLength="10" lengthAdjust="spacingAndGlyphs">?</text>
</g>
</g>
<!-- window border highlight -->
<rect x="53.5" y="36.5" width="1349" height="786" rx="10" ry="10" fill="none" stroke="#555" stroke-opacity="0.5" stroke-width="1"/>

<!-- traffic lights -->
<circle cx="69" cy="53" r="6" fill="#ec6a5e"/>
<circle cx="69" cy="53" r="1.6" fill="#7e0508"/>
<circle cx="88" cy="53" r="6" fill="#f4bf4f"/>
<circle cx="107" cy="53" r="6" fill="#61c554"/>
<!-- title -->
<text x="728" y="57" font-size="13.5" fill="#dadada" stroke="#dadada" stroke-width="0.25" text-anchor="middle" textLength="412" lengthAdjust="spacingAndGlyphs">[Extension Development Host] examples — New Document 2.tldr</text>
</svg>
</body></html>
